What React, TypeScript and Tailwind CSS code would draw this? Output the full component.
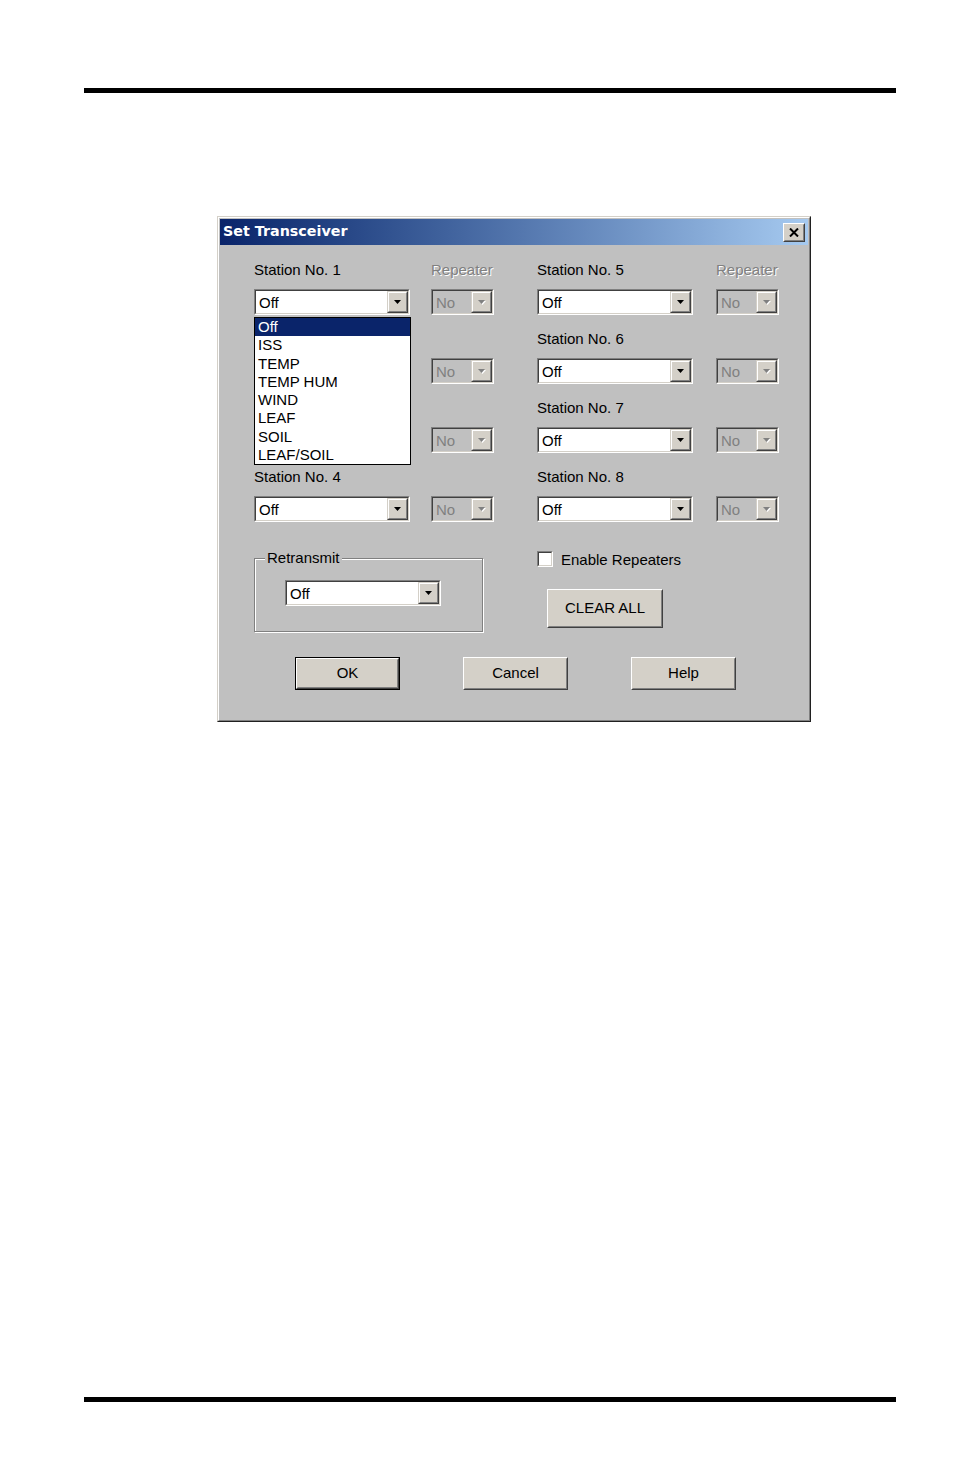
import React from "react";

const font = "font-['Liberation_Sans',Arial,sans-serif]";

function Arrow({ disabled = false }: { disabled?: boolean }) {
  return (
    <svg width="8" height="5" viewBox="0 0 8 5" className="block">
      {disabled && <polygon points="1,1 8,1 4.5,5" fill="#ffffff" />}
      <polygon points="0,0 7,0 3.5,4" fill={disabled ? "#808080" : "#000000"} />
    </svg>
  );
}

function Combo({
  value,
  width,
  disabled = false,
}: {
  value: string;
  width: string;
  disabled?: boolean;
}) {
  return (
    <div
      className={`${width} h-[26px] border border-t-[#808080] border-l-[#808080] border-r-white border-b-white`}
    >
      <div
        className={`h-full flex items-center border border-t-[#404040] border-l-[#404040] border-r-[#d4d0c8] border-b-[#d4d0c8] ${
          disabled ? "bg-[#c0c0c0]" : "bg-white"
        }`}
      >
        <span
          className={`flex-1 pl-[3px] text-[15px] leading-none ${
            disabled ? "text-[#808080]" : "text-black"
          }`}
        >
          {value}
        </span>
        <div className="w-[21px] h-full border border-t-[#d4d0c8] border-l-[#d4d0c8] border-r-[#404040] border-b-[#404040]">
          <div className="h-full bg-[#d4d0c8] flex items-center justify-center border border-t-white border-l-white border-r-[#808080] border-b-[#808080]">
            <Arrow disabled={disabled} />
          </div>
        </div>
      </div>
    </div>
  );
}

function WinButton({
  label,
  width,
  height,
  isDefault = false,
}: {
  label: string;
  width: string;
  height: string;
  isDefault?: boolean;
}) {
  return (
    <div className={`${width} ${height} ${isDefault ? "border border-black" : ""}`}>
      <div className="h-full border border-t-white border-l-white border-r-[#404040] border-b-[#404040]">
        <div className="h-full bg-[#d4d0c8] flex items-center justify-center border border-t-[#d4d0c8] border-l-[#d4d0c8] border-r-[#808080] border-b-[#808080] text-[15px] text-black">
          {label}
        </div>
      </div>
    </div>
  );
}

const options = ["Off", "ISS", "TEMP", "TEMP HUM", "WIND", "LEAF", "SOIL", "LEAF/SOIL"];

function StationBlock({
  n,
  showRepeater,
  gap,
  open = false,
  hidden = false,
}: {
  n: number;
  showRepeater: boolean;
  gap: string;
  open?: boolean;
  hidden?: boolean;
}) {
  return (
    <div className={`flex ${gap}`}>
      <div className={`flex flex-col ${hidden ? "invisible" : ""}`}>
        <div className="h-[18px] leading-[18px] text-[15px] text-black">Station No. {n}</div>
        <div className="relative mt-[10px]">
          <Combo value="Off" width="w-[156px]" />
          {open && (
            <div className="visible absolute left-0 top-[28px] z-10 w-[157px] h-[148px] border border-black bg-white">
              {options.map((o, i) => (
                <div
                  key={o}
                  className={`h-[18.25px] leading-[18.25px] pl-[3px] text-[15px] ${
                    i === 0 ? "bg-[#0a246a] text-white" : "text-black"
                  }`}
                >
                  {o}
                </div>
              ))}
            </div>
          )}
        </div>
      </div>
      <div className="flex flex-col">
        <div className="h-[18px] leading-[18px] text-[15px] text-[#808080] [text-shadow:1px_1px_0_#ffffff]">
          {showRepeater ? "Repeater" : ""}
        </div>
        <div className="mt-[10px]">
          <Combo value="No" width="w-[63px]" disabled />
        </div>
      </div>
    </div>
  );
}

export default function App() {
  return (
    <div className={`w-[954px] h-[1475px] bg-white flex flex-col ${font}`}>
      <div className="pt-[88px] pl-[84px] pr-[58px]">
        <div className="h-[5px] bg-black" />
      </div>

      <div className="ml-[217px] mt-[123px] w-[594px] h-[506px] border border-t-[#d4d0c8] border-l-[#d4d0c8] border-r-[#202020] border-b-[#202020]">
        <div className="h-full bg-[#c0c0c0] border border-t-white border-l-white border-r-[#808080] border-b-[#808080] p-[1px] flex flex-col">
          <div className="h-[26px] flex items-center justify-between bg-gradient-to-r from-[#0a246a] to-[#a6caf0] pl-[3px] pr-[3px]">
            <span className="font-['DejaVu_Sans',Verdana,sans-serif] font-bold text-[14.3px] text-white">
              Set Transceiver
            </span>
            <div className="w-[22px] h-[19px] border border-t-white border-l-white border-r-[#404040] border-b-[#404040]">
              <div className="h-full bg-[#d4d0c8] flex items-center justify-center border border-t-[#d4d0c8] border-l-[#d4d0c8] border-r-[#808080] border-b-[#808080]">
                <svg width="10" height="9" viewBox="0 0 10 9">
                  <path d="M1 0.5 L9 8.5 M9 0.5 L1 8.5" stroke="#000" strokeWidth="2" />
                </svg>
              </div>
            </div>
          </div>

          <div className="pl-[34px] pt-[16px] flex flex-col">
            <div className="flex">
              <div className="flex flex-col gap-[15px] w-[240px]">
                <StationBlock n={1} showRepeater gap="gap-[21px]" open />
                <StationBlock n={2} showRepeater={false} gap="gap-[21px]" hidden />
                <StationBlock n={3} showRepeater={false} gap="gap-[21px]" hidden />
                <StationBlock n={4} showRepeater={false} gap="gap-[21px]" />
              </div>
              <div className="ml-[43px] flex flex-col gap-[15px]">
                <StationBlock n={5} showRepeater gap="gap-[23px]" />
                <StationBlock n={6} showRepeater={false} gap="gap-[23px]" />
                <StationBlock n={7} showRepeater={false} gap="gap-[23px]" />
                <StationBlock n={8} showRepeater={false} gap="gap-[23px]" />
              </div>
            </div>

            <div className="flex mt-[27px]">
              <div className="w-[229px] pt-[9px]">
                <div className="h-[74px] border border-[#808080] shadow-[inset_1px_1px_0_#ffffff,1px_1px_0_#ffffff] flex flex-col">
                  <span className="-mt-[10px] ml-[10px] px-[2px] w-fit h-[18px] leading-[18px] bg-[#c0c0c0] text-[15px] text-black">
                    Retransmit
                  </span>
                  <div className="mt-[13px] ml-[30px]">
                    <Combo value="Off" width="w-[156px]" />
                  </div>
                </div>
              </div>
              <div className="ml-[54px] pt-[2px] flex flex-col">
                <div className="flex items-center gap-[8px] h-[16px]">
                  <div className="w-[16px] h-[16px] border border-t-[#808080] border-l-[#808080] border-r-white border-b-white">
                    <div className="h-full bg-white border border-t-[#404040] border-l-[#404040] border-r-[#d4d0c8] border-b-[#d4d0c8]" />
                  </div>
                  <span className="text-[15px] leading-none text-black">Enable Repeaters</span>
                </div>
                <div className="mt-[22px] ml-[10px]">
                  <WinButton label="CLEAR ALL" width="w-[116px]" height="h-[39px]" />
                </div>
              </div>
            </div>

            <div className="flex gap-[63px] ml-[41px] mt-[25px]">
              <WinButton label="OK" width="w-[105px]" height="h-[33px]" isDefault />
              <WinButton label="Cancel" width="w-[105px]" height="h-[33px]" />
              <WinButton label="Help" width="w-[105px]" height="h-[33px]" />
            </div>
          </div>
        </div>
      </div>

      <div className="mt-auto pb-[73px] pl-[84px] pr-[58px]">
        <div className="h-[5px] bg-black" />
      </div>
    </div>
  );
}
